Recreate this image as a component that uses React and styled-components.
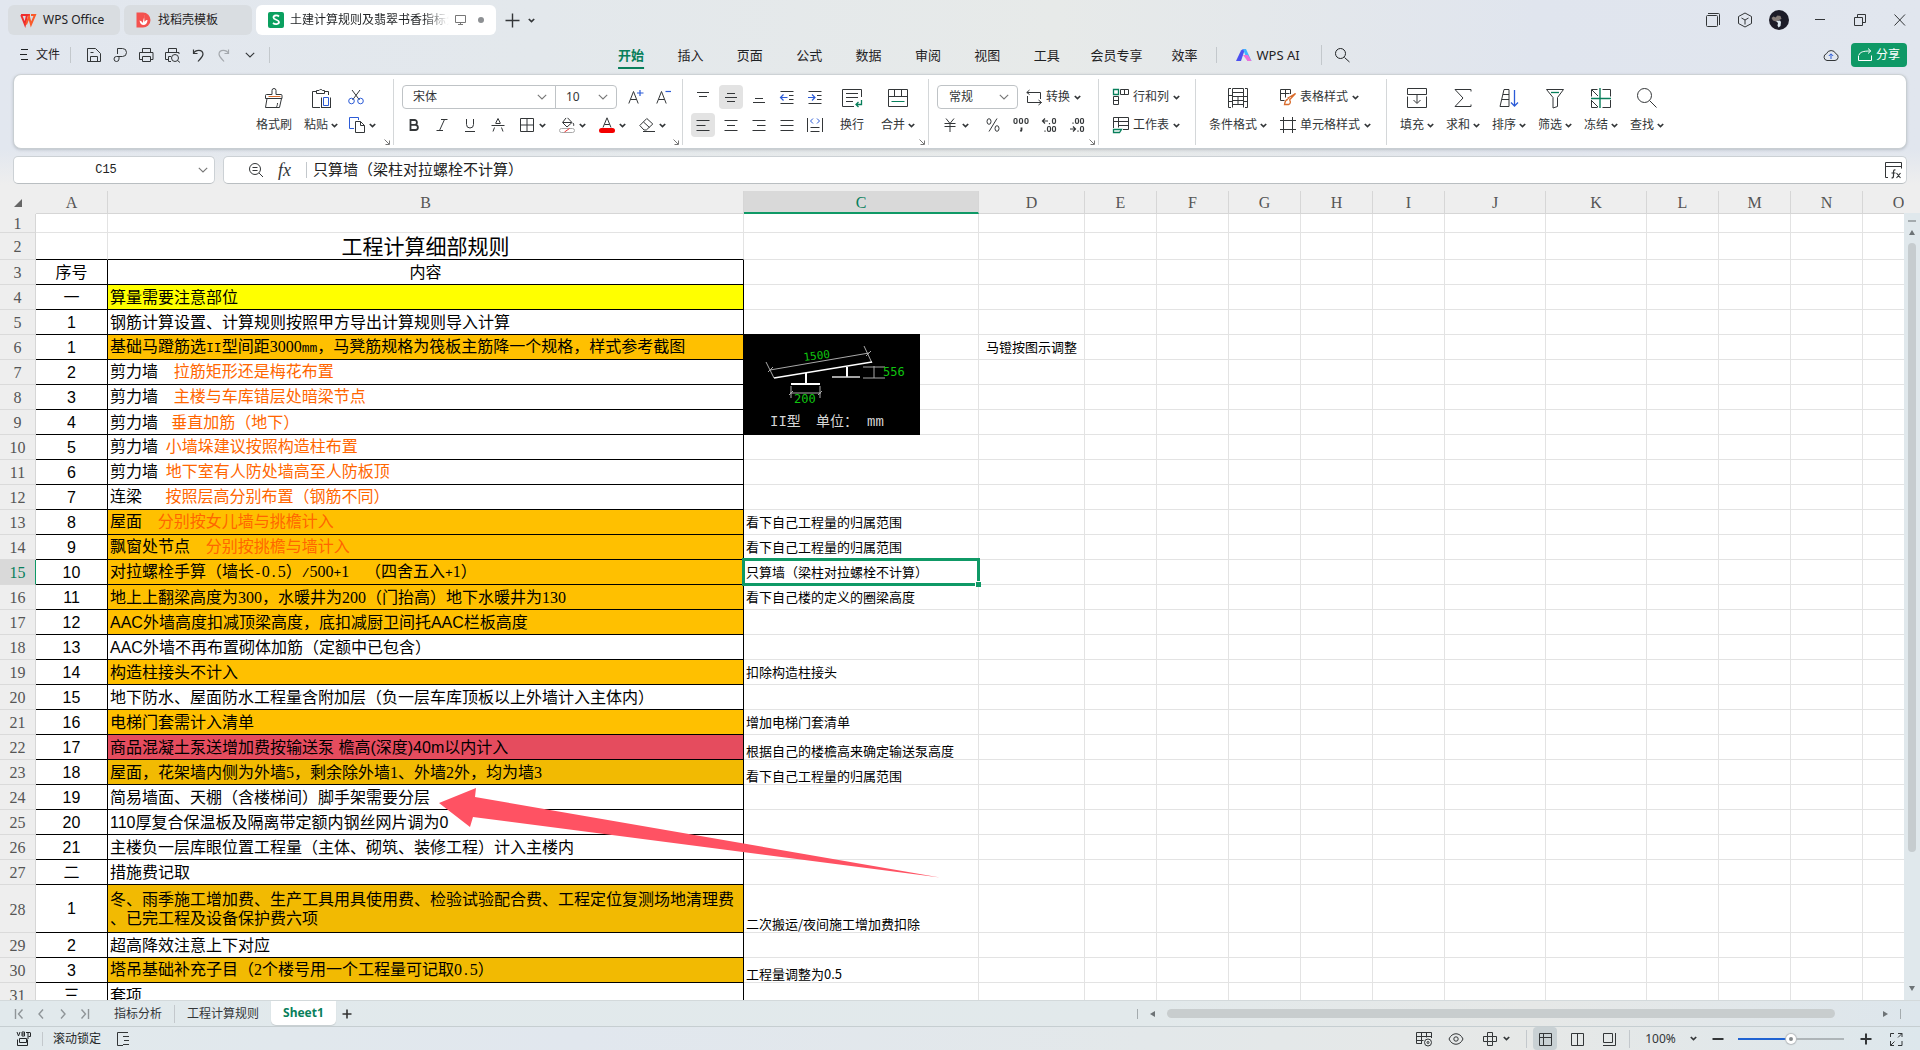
import React from "react";
import styled, { createGlobalStyle, css } from "styled-components";

const GREEN = "#0f9966";
const DEEP = "#087f5b";
const INK = "#333638";
const BLUE = "#2b5bd7";
const UI_FONT = '"Noto Sans", "Noto Sans CJK SC", sans-serif';

const Global = createGlobalStyle`
  *, *::before, *::after { box-sizing: border-box; }
  body { margin: 0; overflow: hidden; }
  button, input, select { font: inherit; color: inherit; }
`;

const Page = styled.div`
  display: flex;
  flex-direction: column;
  height: 100vh;
  font: 12px/16px ${UI_FONT};
  color: #242729;
  background: linear-gradient(90deg, #e2e7ef 0%, #e3e8ec 28%, #e7eae9 55%, #e0e5ee 80%, #e1e6ee 100%);
`;

/* ---------- shared pieces ---------- */

const Svg = styled.svg`
  flex: none;
  display: block;
  fill: none;
  stroke: currentColor;
  stroke-width: ${(p) => p.$w || 1};
  overflow: visible;
`;

const Icon = ({ size = 16, w, children }) => (
  <Svg width={size} height={size} viewBox={`0 0 ${size} ${size}`} $w={w} aria-hidden="true">
    {children}
  </Svg>
);

const Caret = () => (
  <Svg width="7" height="5" viewBox="0 0 7 5" $w={1.7} aria-hidden="true">
    <path d="M.8 1 3.5 3.6 6.2 1" />
  </Svg>
);

const WideCaret = () => (
  <Svg width="10" height="6" viewBox="0 0 10 6" $w={1.1} aria-hidden="true">
    <path d="M.8.8 5 5 9.2.8" />
  </Svg>
);

const Button = styled.button`
  display: flex;
  align-items: center;
  justify-content: center;
  border: 0;
  padding: 0;
  background: transparent;
  color: ${INK};
  white-space: nowrap;
`;

const Rule = styled.span`
  flex: none;
  width: 1px;
  height: ${(p) => p.$h || 16}px;
  margin: 0 ${(p) => p.$m || 0}px;
  background: #c3c8cc;
`;

/* ---------- title bar ---------- */

const TitleBar = styled.header`
  display: flex;
  align-items: center;
  height: 40px;
  padding-left: 8px;
`;

const AppTab = styled(Button)`
  justify-content: flex-start;
  gap: ${(p) => p.$gap || 8}px;
  width: ${(p) => p.$width}px;
  height: 30px;
  margin-right: 4px;
  padding: 0 12px;
  border-radius: 6px;
  background: ${(p) => (p.$active ? "#fff" : "#d9dde1")};
  color: #1f2224;
`;

const FadingTitle = styled.span`
  width: 160px;
  overflow: hidden;
  text-align: left;
  mask-image: linear-gradient(90deg, #000 84%, transparent);
`;

const Dot = styled.span`
  width: 6px;
  height: 6px;
  margin-left: 6px;
  border-radius: 50%;
  background: #8d9093;
`;

const TabTools = styled.div`
  display: flex;
  align-items: center;
  gap: 8px;
  padding-left: 4px;
`;

const WindowTools = styled.div`
  display: flex;
  align-items: center;
  margin-left: auto;
`;

const WindowButton = styled(Button)`
  width: ${(p) => p.$width || 40}px;
  height: 30px;
`;

/* ---------- menu row ---------- */

const MenuRow = styled.div`
  display: flex;
  align-items: center;
  justify-content: space-between;
  height: 30px;
  padding: 0 13px 0 20px;
`;

const QuickTools = styled.div`
  display: flex;
  align-items: center;
  flex: 1 1 0;
`;

const FileButton = styled(Button)`
  gap: 8px;
  color: #1f2224;
`;

const QuickButton = styled(Button)`
  width: 26px;
  height: 24px;
  opacity: ${(p) => (p.$dim ? 0.35 : 1)};
`;

const Menu = styled.nav`
  display: flex;
  align-items: center;
  margin-left: 30px;
  font-size: 13px;
`;

const MenuTabs = styled.div`
  display: grid;
  grid-template-columns: repeat(8, 1fr);
  width: 475px;
`;

const MenuButton = styled(Button)`
  height: 28px;
  color: #1f2224;
  padding: 0 ${(p) => p.$pad || 0}px;
  gap: 4px;
  ${(p) =>
    p.$active &&
    css`
      color: ${DEEP};
      font-weight: 700;
      text-decoration: underline;
      text-decoration-thickness: 2px;
      text-underline-offset: 7px;
    `}
`;

const AccountTools = styled.div`
  display: flex;
  align-items: center;
  justify-content: flex-end;
  gap: 12px;
  flex: 1 1 0;
`;

const ShareButton = styled(Button)`
  gap: 4px;
  width: 56px;
  height: 24px;
  border-radius: 4px;
  background: ${GREEN};
  color: #fff;
`;

/* ---------- ribbon ---------- */

const Ribbon = styled.section`
  display: flex;
  justify-content: center;
  height: 75px;
  margin: 4px 13px 0;
  padding-top: 4px;
  border: 1px solid #c8ced2;
  border-top-color: #cdd2d5;
  border-radius: 8px;
  background: #fff;
  box-shadow: 0 1px 3px rgba(70, 80, 90, 0.25);
`;

const Group = styled.div`
  position: relative;
  display: flex;
  gap: ${(p) => p.$gap || 0}px;
  height: 66px;
  padding: 0 ${(p) => p.$right || 0}px 0 ${(p) => p.$left || 0}px;
  border-right: ${(p) => (p.$last ? 0 : 1)}px solid #d4d7d9;
`;

const Launcher = styled(Button)`
  position: absolute;
  right: 3px;
  bottom: 0;
  width: 6px;
  height: 6px;
  color: #777;
`;

const Stack = styled.div`
  display: flex;
  flex-direction: column;
  gap: 4px;
  padding-top: 6px;
`;

const Line = styled.div`
  display: flex;
  align-items: center;
  gap: 4px;
  height: 24px;
`;

const Tool = styled(Button)`
  width: 24px;
  height: 24px;
  border-radius: 4px;
  background: ${(p) => (p.$on ? "#e3e3e3" : "transparent")};
`;

const DropTool = styled(Button)`
  gap: 4px;
  width: ${(p) => p.$width || 36}px;
  height: 24px;
  padding-left: 2px;
`;

const MoneyTool = styled(DropTool)`
  width: 40px;
  padding: 0 4px 0 2px;
`;

const WideTool = styled(Button)`
  justify-content: flex-start;
  gap: 4px;
  height: 24px;
  padding: 0 4px;
`;

const BigButton = styled(Button)`
  flex-direction: column;
  justify-content: flex-start;
  gap: 9px;
  width: ${(p) => p.$width || 46}px;
  padding-top: 9px;
`;

const BigLabel = styled.span`
  display: flex;
  align-items: center;
  gap: 3px;
  height: 16px;
`;

const Picker = styled.label`
  position: relative;
  display: flex;
  align-items: center;
  width: ${(p) => p.$width}px;
  height: 24px;
  border: 1px solid #bfc3c6;
  border-radius: ${(p) => p.$radius || "4px"};
  margin-right: ${(p) => p.$gap || 0}px;
  margin-left: ${(p) => (p.$joined ? -5 : 0)}px;
  color: ${INK};

  select {
    appearance: none;
    width: 100%;
    height: 22px;
    padding: 0 20px 0 ${(p) => p.$pad || 10}px;
    border: 0;
    background: transparent;
  }
  svg {
    position: absolute;
    right: 8px;
    color: #777;
    pointer-events: none;
  }
`;

const ColorBar = styled.span`
  width: 16px;
  height: 5px;
  border-radius: 3px;
  background: #f40000;
`;

const LetterStack = styled.span`
  display: flex;
  flex-direction: column;
  align-items: center;
`;

/* ---------- formula bar ---------- */

const FormulaRow = styled.div`
  display: flex;
  gap: 8px;
  padding: 7px 13px;
  background: linear-gradient(180deg, rgba(238, 238, 238, 0), #eeeeee 85%);
`;

const Box = styled.div`
  display: flex;
  align-items: center;
  height: 28px;
  border: 1px solid #ccd1d5;
  border-bottom-color: #b9bec1;
  border-radius: 5px;
  background: #fff;
`;

const NameBox = styled(Box)`
  width: 202px;
  color: #777;

  input {
    width: 184px;
    border: 0;
    background: transparent;
    color: #222;
    text-align: center;
    font: 12px/16px "Liberation Mono", monospace;
  }
`;

const FormulaBox = styled(Box)`
  flex: 1;
  padding: 0 4px 0 24px;
  color: ${INK};

  input {
    flex: 1;
    padding: 0 6px 2px;
    border: 0;
    background: transparent;
    color: #222;
    font: 15px/20px "Noto Sans CJK SC", sans-serif;
  }
`;

const Fx = styled.span`
  width: 16px;
  margin: 0 12px 0 14px;
  font: italic 18px/20px "Liberation Serif", serif;
`;

/* ---------- sheet ---------- */

const SheetArea = styled.main`
  position: relative;
  display: flex;
  flex: 1;
  min-height: 0;
  overflow: hidden;
  background: #eeeeee;
`;

const Viewport = styled.div`
  flex: 1;
  min-width: 0;
  overflow: hidden;
`;

const Grid = styled.table`
  width: 100%;
  min-width: 1935px;
  table-layout: fixed;
  border-collapse: separate;
  border-spacing: 0;
  background: #fff;
`;

const ColHead = styled.th`
  height: 23px;
  padding: 2px 0 0;
  border-right: 1px solid #d6d6d6;
  border-bottom: ${(p) => (p.$on ? `2px solid ${GREEN}` : "1px solid #d6d6d6")};
  background: ${(p) => (p.$on ? "#d9d9d9" : "#eeeeee")};
  color: ${(p) => (p.$on ? DEEP : "#555")};
  font: 16px/18px "Liberation Serif", serif;
`;

const Corner = styled(ColHead)`
  border-color: #eeeeee;
  svg { margin-left: 14px; }
`;

const RowHead = styled.th`
  padding: 2px 0 0;
  border-right: 1px solid ${(p) => (p.$on ? GREEN : "#d6d6d6")};
  border-bottom: 1px solid #dadada;
  background: ${(p) => (p.$on ? "#d9d9d9" : "#eeeeee")};
  color: ${(p) => (p.$on ? DEEP : "#555")};
  font: 16px/16px "Liberation Serif", serif;
`;

const Row = styled.tr`
  height: ${(p) => p.$h}px;
`;

const Cell = styled.td`
  padding: 0 2px;
  border-right: 1px solid #e3e3e3;
  border-bottom: 1px solid #e3e3e3;
  color: #000;
`;

const FormCell = styled(Cell)`
  border-right-color: ${(p) => (p.$bare ? "#e3e3e3" : "#000")};
  border-bottom-color: ${(p) => (p.$open ? "#e3e3e3" : "#000")};
  background: ${(p) => p.$fill || "#fff"};
  text-align: ${(p) => (p.$center ? "center" : "left")};
  white-space: pre-wrap;
  line-break: anywhere;
  font: ${(p) => (p.$title ? 21 : 16)}px/19px "Liberation Sans", "Noto Sans CJK SC", sans-serif;
`;

const NoteCell = styled(Cell)`
  position: relative;
  padding-bottom: ${(p) => (p.$low ? 1 : 2)}px;
  vertical-align: ${(p) => (p.$low ? "bottom" : "middle")};
  text-align: ${(p) => (p.$center ? "center" : "left")};
  white-space: nowrap;
  font: 13px/15px "Noto Sans CJK SC", sans-serif;
`;

const SongDigits = styled.span`
  font-family: "Liberation Serif", serif;
`;
const SongLatin = styled.span`
  font-family: "Liberation Mono", monospace;
  font-size: 13px;
`;
const Accent = styled.span`
  color: #ff6600;
`;

const Selection = styled.div`
  position: absolute;
  z-index: 1;
  inset: -2px;
  border: 3px solid ${GREEN};

  &::after {
    content: "";
    position: absolute;
    right: -4px;
    bottom: -4px;
    width: 6px;
    height: 6px;
    border: solid #fff;
    border-width: 1px 0 0 1px;
    background: ${GREEN};
  }
`;

const Drawing = styled.svg`
  position: absolute;
  z-index: 1;
  top: -1px;
  left: 0;
  display: block;
  background: #000;
`;

const Arrow = styled.svg`
  position: absolute;
  z-index: 2;
  left: 439px;
  top: 597px;
  pointer-events: none;
`;

const ScrollColumn = styled.div`
  display: flex;
  flex-direction: column;
  align-items: center;
  gap: 8px;
  width: 16px;
  margin-top: 22px;
  padding: 7px 0 9px;
  background: #e0e8ec;
  color: #6d7376;

  svg:last-child { margin-top: auto; }
`;

const ScrollThumb = styled.div`
  width: 8px;
  flex: 0 0 ${(p) => p.$share}%;
  border-radius: 4px;
  background: #c6cccf;
`;

/* ---------- bottom bars ---------- */

const TabsBar = styled.div`
  display: flex;
  align-items: center;
  height: 26px;
  border-top: 1px solid #d3d9db;
  background: linear-gradient(90deg, #e1e9ec, #e2e9eb 60%, #e6e8e7 80%, #dde6ec);
  color: #2a2d2f;
`;

const SheetNav = styled.div`
  display: flex;
  padding-left: 8px;
`;

const NavButton = styled(Button)`
  width: 22px;
  height: 24px;
  color: #8f9598;
`;

const SheetTab = styled(Button)`
  height: 25px;
  padding: 0 12px;
  ${(p) =>
    p.$active &&
    css`
      align-self: flex-start;
      height: 24px;
      border-radius: 0 0 5px 5px;
      background: #fff;
      color: ${DEEP};
      font-weight: 700;
      box-shadow: 0 1px 1px rgba(0, 0, 0, 0.12);
    `}
`;

const SheetTabs = styled.div`
  display: flex;
  align-items: center;
  height: 25px;
  padding-left: 6px;
`;

const HScroll = styled.div`
  display: flex;
  align-items: center;
  gap: 12px;
  width: 764px;
  margin-left: auto;
  margin-right: 19px;
  color: #6d7376;
`;

const HRule = styled(Rule)`
  background: #a4abae;
`;

const HThumb = styled.div`
  flex: 1;
  height: 9px;
  margin-right: 36px;
  border-radius: 5px;
  background: #c8cdce;
`;

const StatusBar = styled.footer`
  display: flex;
  align-items: center;
  justify-content: space-between;
  height: 24px;
  padding: 0 8px 0 16px;
  border-top: 1px solid #c6ced1;
  background: linear-gradient(90deg, #e1e9ec, #e1e7ee 30%, #e3e8ea 60%, #e6e8e7 80%, #dde7ec);
`;

const StatusSide = styled.div`
  display: flex;
  align-items: center;
  height: 23px;
`;

const StatusButton = styled(Button)`
  gap: ${(p) => p.$gap || 5}px;
  width: ${(p) => p.$width || 32}px;
  height: 23px;
  border-radius: 4px;
  background: ${(p) => (p.$on ? "#c9d1d4" : "transparent")};
`;

const Zoom = styled.input`
  appearance: none;
  width: 106px;
  height: 16px;
  margin: 0 8px 0 6px;
  background: transparent;

  &::-webkit-slider-runnable-track {
    height: 2px;
    background: linear-gradient(90deg, #1f63d2 50%, #aeb5b8 50%);
  }
  &::-webkit-slider-thumb {
    appearance: none;
    width: 10px;
    height: 10px;
    margin-top: -4px;
    border: 3px solid #fff;
    border-radius: 50%;
    background: #858a8c;
    box-shadow: 0 0 1px 1px #b5babd;
  }
`;

/* ---------- icons ---------- */

const icons = {
  brush: (
    <Icon size={20}>
      <path d="M8 6.500V2.500a2 2 0 0 1 4 0v4h5a1 1 0 0 1 1 1v3H1.500v-3a1 1 0 0 1 1-1H8M3 10.500 1.500 19.500H15.500l2-9M12 19.500c1-1.200 1.500-2.500 1.500-4.500" />
      <path d="M4.500 8.500h12" stroke="#d96b2b" />
    </Icon>
  ),
  paste: (
    <Icon size={20}>
      <path d="M5 3.500H1.500v16H9M14 3.500h3.500V7M5.500 5.500v-3H8a2 2 0 0 1 3.500 0h2v3z" />
      <path d="M10.500 9.500V19.500M19.500 9.500V19.500M10 19.500h10" />
      <path d="M12.500 9.500h5v8h-5z" stroke={BLUE} />
    </Icon>
  ),
  cut: (
    <Icon>
      <path d="m4 1 7.500 10M12 1 4.500 11" />
      <circle cx="3.500" cy="12" r="2.800" stroke={BLUE} />
      <circle cx="12.500" cy="12" r="2.800" stroke={BLUE} />
    </Icon>
  ),
  copy: (
    <Icon>
      <path d="M9.500 3V.5h-9v11H5" stroke={BLUE} />
      <path d="M6.500 4.500h5l4 4v7h-9zM11.500 4.500v4h4" />
    </Icon>
  ),
  border: (
    <Icon>
      <path d="M1.500 1.500h13v13h-13zM8 1.500v13M1.500 8h13" />
    </Icon>
  ),
  fill: (
    <Icon>
      <path d="M7 1 3.500 5.500 8 10l5-4.500L8.500.8M4 5.500h8.500M14 6c1 1.500 1 2.500.2 3" />
      <rect x=".5" y="11.500" width="15" height="4" rx="2" stroke="#aaa" />
      <path d="m5.500 15 5-3.500" stroke="#e33" />
    </Icon>
  ),
  erase: (
    <Icon>
      <path d="m.8 8.500 7-7 6 5.500-6.500 6H5zM4.500 5l6 5.500M4 14.500h12" />
    </Icon>
  ),
  wrap: (
    <Icon size={20}>
      <path d="M19.500 9V1.500h-19v17H12M4 5.500h12M4 9.500h12M4 13.500h7" />
      <path d="M19.500 12v4.500H14m2.500-2.500L14 16.500l2.500 2.500" stroke={DEEP} strokeWidth="1.300" />
    </Icon>
  ),
  merge: (
    <Icon size={20}>
      <path d="M.5 1.500h19v17H.5zM.5 8.500h19M6.500 1.500v7M13.500 1.500v7" />
      <path d="M3.500 13.500h13" stroke={DEEP} />
    </Icon>
  ),
  convert: (
    <Icon>
      <path d="M3.500 1 .8 3.500l2.700 2M.8 3.500h13.700V10M1.500 7v6.500h14m-3-2.500 3 2.500-3 2.500" />
    </Icon>
  ),
  rowscols: (
    <Icon>
      <path d="M.5.5h5v5h-5z" stroke={DEEP} strokeWidth="1.300" />
      <path d="M7.500.5h8v5h-8zM11.500.5v5M.5 7.500v8h5v-8zM.5 11.500h5" />
    </Icon>
  ),
  worksheet: (
    <Icon>
      <path d="M.5 11V.5h15v12H10M.5 4.500h15M5.500.5v10M5.500 8.500h10" />
      <path d="M.5 12.500h8l-2 3h-6z" stroke={DEEP} strokeWidth="1.300" />
    </Icon>
  ),
  conditional: (
    <Icon size={20}>
      <path d="M3 .5H.5v19H3M17 .5h2.500v19H17M4.500.5v19M4.500.5h11v8h-11M4.500 4.500h11M15.500 4v15.500M4.500 12.500h11M10 8.500v8M4.500 16.500h11M.5 7.500h4M.5 13.500h4M15.500 8.500h4M15.500 13.500h4" />
    </Icon>
  ),
  tablestyle: (
    <Icon>
      <path d="M10.500 5V.5H.5v11h4M.5 4.500h9M5.500.5v8" />
      <path d="m15.500 4.500-5.500 6-2-1.500zM8 10.500c-2 0-3 2-3.500 5h4c2-.5 2.500-3 1-4.500" stroke="#d96b2b" strokeWidth="1.300" />
    </Icon>
  ),
  cellstyle: (
    <Icon>
      <path d="M3.500 0v16M12.500 0v16M0 3.500h16M0 12.500h16" />
    </Icon>
  ),
  fillDown: (
    <Icon size={20}>
      <path d="M.5 6.500v-6h19v6zM.5 8.500v11h19v-11M10 6.500V15m-3.500-3L10 15.500l3.500-3.500" />
    </Icon>
  ),
  sum: (
    <Icon size={20}>
      <path d="M18 3.500v-2H2l8 8.500-8 8.500h16v-2" />
    </Icon>
  ),
  sort: (
    <Icon size={20}>
      <path d="m1 18.500 4-17h5v17zM4 6.500h6M3 11.500h7" />
      <path d="M15.500 2v16m-3.500-3.500 3.500 3.500 3.500-3.500" stroke={BLUE} strokeWidth="1.300" />
    </Icon>
  ),
  filter: (
    <Icon size={20}>
      <path d="M1.500 1.500h17l-6 8v9l-4.500 1.500V9.500z" />
      <path d="M6 4.500h8" stroke={DEEP} strokeWidth="1.300" />
    </Icon>
  ),
  freeze: (
    <Icon size={20}>
      <path d="M6.500 1.500H.5v7M.5 12v7.500h6M11.500 1.500h8v7M19.500 12v7.500h-8M1 2l6 6M1 13l6 6" />
      <path d="M9 0v20M0 10.500h20" stroke={DEEP} strokeWidth="1.400" />
    </Icon>
  ),
  find: (
    <Icon size={20}>
      <circle cx="7.500" cy="7.500" r="7" />
      <path d="m12.500 12.500 7 7" />
    </Icon>
  ),
};

const quick = [
  ["保存", <Icon><path d="M1.500 14.500v-13h8l5 5v8zM4.500 14.500v-5h7v5M4.500 5.500h3" /></Icon>],
  ["输出", <Icon><path d="M5.500 7V1.500h5a4 4 0 0 1 0 8h-6a2.500 2.500 0 1 0 2.500 2.500V9.500" /></Icon>],
  ["打印", <Icon><path d="M4.500 5.500v-4h8v4M4 12.500H1.500v-7h13.500v7H12.500M4.500 9.500h8v5h-8z" /></Icon>],
  ["预览", <Icon><path d="M4.500 5.500v-4h8v4M4.500 12.500h-3v-7H15V7M7 14.500H4.500v-5H7" /><circle cx="11" cy="11" r="3.500" /><path d="m13.500 13.500 2.500 2" /></Icon>],
  ["撤销", <Icon w={1.2}><path d="M3.500 2.500v4h4M3.500 6.500c2-4 9-4.500 9.500.5 0 3-3 5-5 7.500" /></Icon>],
];

const alignTop = [
  ["顶端", "M2 3.500h12M4 7.500h8"],
  ["垂直居中", "M4 4.500h8M2 8.500h12M4 12.500h8"],
  ["底端", "M4 9.500h8M2 13.500h12"],
];
const alignLow = [
  ["左对齐", "M1.500 3.500h13M1.500 8.500h9M1.500 13.500h13"],
  ["居中", "M1.500 3.500h13M4 8.500h8M1.500 13.500h13"],
  ["右对齐", "M1.500 3.500h13M6 8.500h8.500M1.500 13.500h13"],
  ["两端对齐", "M1.500 3.500h13M1.500 8.500h13M1.500 13.500h13"],
];

/* ---------- data ---------- */

const ORANGE = "#ffc000";
const AMBER = "#f2ba02";

const rows = [
  { n: 1, h: 19, bare: true, open: true },
  { n: 2, h: 27, bare: true, b: "工程计算细部规则", title: true },
  { n: 3, a: "序号", b: "内容", center: true },
  { n: 4, a: "一", b: "算量需要注意部位", fill: "#ffff00" },
  { n: 5, a: "1", b: "钢筋计算设置、计算规则按照甲方导出计算规则导入计算" },
  { n: 6, a: "1", b: "基础马蹬筋选II型间距3000mm，马凳筋规格为筏板主筋降一个规格，样式参考截图", fill: ORANGE, d: "马镫按图示调整", drawing: true },
  { n: 7, a: "2", b: "剪力墙  ", accent: "拉筋矩形还是梅花布置" },
  { n: 8, a: "3", b: "剪力墙  ", accent: "主楼与车库错层处暗梁节点" },
  { n: 9, a: "4", b: "剪力墙   ", accent: "垂直加筋（地下）", arial: true },
  { n: 10, a: "5", b: "剪力墙 ", accent: "小墙垛建议按照构造柱布置" },
  { n: 11, a: "6", b: "剪力墙 ", accent: "地下室有人防处墙高至人防板顶" },
  { n: 12, a: "7", b: "连梁   ", accent: "按照层高分别布置（钢筋不同）" },
  { n: 13, a: "8", b: "屋面  ", accent: "分别按女儿墙与挑檐计入", fill: ORANGE, c: "看下自己工程量的归属范围" },
  { n: 14, a: "9", b: "飘窗处节点  ", accent: "分别按挑檐与墙计入", fill: ORANGE, c: "看下自己工程量的归属范围" },
  { n: 15, a: "10", b: "对拉螺栓手算（墙长-0.5）/500+1  （四舍五入+1）", fill: ORANGE, c: "只算墙（梁柱对拉螺栓不计算）", selected: true },
  { n: 16, a: "11", b: "地上上翻梁高度为300，水暖井为200（门抬高）地下水暖井为130", fill: ORANGE, c: "看下自己楼的定义的圈梁高度" },
  { n: 17, a: "12", b: "AAC外墙高度扣减顶梁高度，底扣减厨卫间托AAC栏板高度", fill: ORANGE, arial: true },
  { n: 18, a: "13", b: "AAC外墙不再布置砌体加筋（定额中已包含）", arial: true },
  { n: 19, a: "14", b: "构造柱接头不计入", fill: ORANGE, c: "扣除构造柱接头" },
  { n: 20, a: "15", b: "地下防水、屋面防水工程量含附加层（负一层车库顶板以上外墙计入主体内）" },
  { n: 21, a: "16", b: "电梯门套需计入清单", fill: ORANGE, c: "增加电梯门套清单" },
  { n: 22, a: "17", b: "商品混凝土泵送增加费按输送泵 檐高(深度)40m以内计入", fill: "#e54c5e", arial: true, c: "根据自己的楼檐高来确定输送泵高度", low: true },
  { n: 23, a: "18", b: "屋面，花架墙内侧为外墙5，剩余除外墙1、外墙2外，均为墙3", fill: AMBER, c: "看下自己工程量的归属范围", low: true },
  { n: 24, a: "19", b: "简易墙面、天棚（含楼梯间）脚手架需要分层" },
  { n: 25, a: "20", b: "110厚复合保温板及隔离带定额内钢丝网片调为0", arial: true },
  { n: 26, a: "21", b: "主楼负一层库眼位置工程量（主体、砌筑、装修工程）计入主楼内" },
  { n: 27, a: "二", b: "措施费记取" },
  { n: 28, h: 48, a: "1", b: "冬、雨季施工增加费、生产工具用具使用费、检验试验配合费、工程定位复测场地清理费、已完工程及设备保护费六项", fill: AMBER, c: "二次搬运/夜间施工增加费扣除", low: true },
  { n: 29, a: "2", b: "超高降效注意上下对应" },
  { n: 30, a: "3", b: "塔吊基础补充子目（2个楼号用一个工程量可记取0.5）", fill: AMBER, c: "工程量调整为0.5", low: true },
  { n: 31, a: "三", b: "套项" },
];

const columns = [
  ["A", 72], ["B", 636], ["C", 235], ["D", 106], ["E", 72], ["F", 72], ["G", 72], ["H", 72],
  ["I", 72], ["J", 101], ["K", 101], ["L", 72], ["M", 72], ["N", 72], ["O", 0],
];

const Col = styled.col`
  width: ${(p) => (p.$w ? `${p.$w}px` : "auto")};
`;

function SongText({ text }) {
  return text.split(/([0-9]+|[A-Za-z.\/+\- ]+)/).map((part, i) => {
    if (/^[0-9]/.test(part)) return <SongDigits key={i}>{part}</SongDigits>;
    if (/^[A-Za-z.\/+\- ]/.test(part)) return <SongLatin key={i}>{part}</SongLatin>;
    return part;
  });
}

function SteelDrawing() {
  return (
    <Drawing width="176" height="101" viewBox="0 0 176 101" role="img" aria-label="II型">
      <g fill="none" stroke="#a9a9a9" strokeWidth="1">
        <path d="M26 36 125 19M22 28l8 16M120 12l8 17M24 38l5-5M122 22l5-5" />
        <path d="M119 33h22M119 44h22M130 32v12M46 59h31M47 52v12M76 52v12M45 61l4-4M74 61l4-4" />
      </g>
      <path d="M30 44 128 28" fill="none" stroke="#fff" strokeWidth="1.500" />
      <path d="M62 39v11M47 50h29M103 33v10" fill="none" stroke="#fff" strokeWidth="2" />
      <path d="M88 43h28" stroke="#ddd" strokeWidth="1.500" />
      <g fill="#0fc40f" fontFamily="DejaVu Sans Mono, monospace">
        <text x="60" y="27" fontSize="11" transform="rotate(-7 60 27)">1500</text>
        <text x="50" y="69" fontSize="12">200</text>
        <text x="139" y="42" fontSize="12">556</text>
      </g>
      <g fill="#d6d6d6" fontFamily="Liberation Mono, Noto Sans CJK SC, monospace" fontSize="14">
        <text x="26" y="92">II型</text>
        <text x="72" y="92">单位：</text>
        <text x="123" y="92">mm</text>
      </g>
    </Drawing>
  );
}

function SheetRow({ row }) {
  return (
    <Row $h={row.h || 25}>
      <RowHead scope="row" $on={row.selected}>{row.n}</RowHead>
      <FormCell $center $bare={row.bare} $open={row.open}>{row.a}</FormCell>
      <FormCell $center={row.center || row.title} $title={row.title} $fill={row.fill} $bare={row.bare} $open={row.open}>
        {row.b && (row.arial ? row.b : <SongText text={row.b} />)}
        {row.accent && <Accent>{row.accent}</Accent>}
      </FormCell>
      <NoteCell $low={row.low}>
        {row.c}
        {row.selected && <Selection />}
        {row.drawing && <SteelDrawing />}
      </NoteCell>
      <NoteCell $center>{row.d}</NoteCell>
      {columns.slice(4).map(([name]) => <Cell key={name} />)}
    </Row>
  );
}

const Big = ({ icon, label, width, drop = true }) => (
  <BigButton $width={width}>
    {icons[icon]}
    <BigLabel>{label}{drop && <Caret />}</BigLabel>
  </BigButton>
);

const Wide = ({ icon, label }) => (
  <WideTool>{icons[icon]}{label}<Caret /></WideTool>
);

const MoreSettings = () => (
  <Launcher aria-label="更多设置">
    <Icon size={6}><path d="m.5.5 4.500 4.500M5.500 1.500v4h-4" /></Icon>
  </Launcher>
);

function RibbonPanel() {
  return (
    <Ribbon>
      <Group $right={13}>
        <Big icon="brush" label="格式刷" width={48} drop={false} />
        <Big icon="paste" label="粘贴" />
        <Stack>
          <Line><Tool aria-label="剪切">{icons.cut}</Tool></Line>
          <Line><DropTool aria-label="复制">{icons.copy}<Caret /></DropTool></Line>
        </Stack>
        <MoreSettings />
      </Group>

      <Group $left={8} $right={6}>
        <Stack>
          <Line>
            <Picker $width={154} $radius="4px 0 0 4px">
              <select aria-label="字体" defaultValue="宋体"><option>宋体</option></select>
              <WideCaret />
            </Picker>
            <Picker $width={62} $radius="0 4px 4px 0" $joined $gap={3}>
              <select aria-label="字号" defaultValue="10"><option>10</option></select>
              <WideCaret />
            </Picker>
            <Tool aria-label="增大字号">
              <Icon><path d="m.8 14.500 4.700-12 4.700 12M2.500 10.500h6" /><path d="M12 1v6M9 4h6.500" stroke={BLUE} strokeWidth="1.200" /></Icon>
            </Tool>
            <Tool aria-label="减小字号">
              <Icon><path d="m.8 14.500 4.700-12 4.700 12M2.500 10.500h6" /><path d="M9.500 2.500H15" stroke={BLUE} strokeWidth="1.200" /></Icon>
            </Tool>
          </Line>
          <Line>
            <Tool aria-label="加粗"><Icon w={1.8}><path d="M4.500 3h4a2.300 2.300 0 0 1 0 4.800h-4zM4.500 7.800h4.800a2.600 2.600 0 0 1 0 5.200H4.500z" /></Icon></Tool>
            <Tool aria-label="倾斜"><Icon><path d="M7 2.500h6.500M2.500 13.500H9M10.500 2.500l-5 11" /></Icon></Tool>
            <Tool aria-label="下划线"><Icon><path d="M4.500 2v5.500a3.500 3.500 0 0 0 7 0V2M3 14.500h10" /></Icon></Tool>
            <Tool aria-label="删除线"><Icon><path d="m5.500 6.500 2.500-5 2.500 5M1.500 8.500h13M4.500 10.500l-1.500 4M11.500 10.500l1.500 4M6 6.500h4" /></Icon></Tool>
            <DropTool aria-label="边框">{icons.border}<Caret /></DropTool>
            <DropTool aria-label="填充颜色">{icons.fill}<Caret /></DropTool>
            <DropTool aria-label="字体颜色">
              <LetterStack>
                <Svg width="10" height="11" viewBox="0 0 10 11"><path d="M1 10.500 5 .8l4 9.700M2.500 7.500h5" /></Svg>
                <ColorBar />
              </LetterStack>
              <Caret />
            </DropTool>
            <DropTool aria-label="清除">{icons.erase}<Caret /></DropTool>
          </Line>
        </Stack>
        <MoreSettings />
      </Group>

      <Group $left={8} $right={9}>
        <Stack>
          <Line>
            {alignTop.map(([name, d], i) => (
              <Tool key={name} aria-label={name} $on={i === 1}><Icon><path d={d} /></Icon></Tool>
            ))}
            <Tool aria-label="减少缩进"><Icon><path d="M1.500 2.500h13M10 6.500h4.500M10 10.500h4.500M1.500 14.500h13" /><path d="M8.500 8.500H1.500m3-3-3 3 3 3" stroke={BLUE} strokeWidth="1.200" /></Icon></Tool>
            <Tool aria-label="增加缩进"><Icon><path d="M1.500 2.500h13M10 6.500h4.500M10 10.500h4.500M1.500 14.500h13" /><path d="M1 8.500h7m-3-3 3 3-3 3" stroke={BLUE} strokeWidth="1.200" /></Icon></Tool>
          </Line>
          <Line>
            {alignLow.map(([name, d], i) => (
              <Tool key={name} aria-label={name} $on={i === 0}><Icon><path d={d} /></Icon></Tool>
            ))}
            <Tool aria-label="分散对齐"><Icon><path d="M.5 1v14M15.500 1v14M3.500 10.500h9M3.500 14.500h9" /><path d="M6 1.500 3.500 4 6 6.500M10 1.500 12.500 4 10 6.500" stroke={BLUE} /></Icon></Tool>
          </Line>
        </Stack>
        <Big icon="wrap" label="换行" width={50} drop={false} />
        <Big icon="merge" label="合并" width={42} />
        <MoreSettings />
      </Group>

      <Group $left={8} $right={9}>
        <Stack>
          <Line>
            <Picker $width={81} $pad={11}>
              <select aria-label="数字格式" defaultValue="常规"><option>常规</option></select>
              <WideCaret />
            </Picker>
            <Wide icon="convert" label="转换" />
          </Line>
          <Line>
            <MoneyTool aria-label="货币"><Icon><path d="m4 1.500 4 5 4-5M2.500 6.500h11M2.500 9.500h11M8 6.500v8.500" /></Icon><Caret /></MoneyTool>
            <Tool aria-label="百分比"><Icon><path d="M12 1.500 4 14.500" /><ellipse cx="4" cy="4.500" rx="2" ry="2.800" /><ellipse cx="12" cy="11.500" rx="2" ry="2.800" /></Icon></Tool>
            <Tool aria-label="千位分隔"><Icon w={1.2}><rect x="1" y="1.500" width="3" height="5" rx="1.400" /><rect x="6.500" y="1.500" width="3" height="5" rx="1.400" /><rect x="12" y="1.500" width="3" height="5" rx="1.400" /><path d="M8.500 10.500v2.500l-1 1.500" strokeWidth="1.800" /></Icon></Tool>
            <Tool aria-label="增加小数位"><Icon w={1.2}><path d="M7 4H1.500M4 1.500 1.500 4 4 6.500M8.500 6v1.200M4 13.500v1.200" /><rect x="11.500" y="1.500" width="3" height="5" rx="1.400" /><rect x="6.500" y="9.500" width="3" height="5" rx="1.400" /><rect x="11.500" y="9.500" width="3" height="5" rx="1.400" /></Icon></Tool>
            <Tool aria-label="减少小数位"><Icon w={1.2}><path d="M1 12h5.500M4 9.500 6.500 12 4 14.500M9 13.500v1.200M4 5.500v1.200" /><rect x="6.500" y="1.500" width="3" height="5" rx="1.400" /><rect x="11.500" y="1.500" width="3" height="5" rx="1.400" /><rect x="11.500" y="9.500" width="3" height="5" rx="1.400" /></Icon></Tool>
          </Line>
        </Stack>
        <MoreSettings />
      </Group>

      <Group $left={10} $right={11}>
        <Stack>
          <Wide icon="rowscols" label="行和列" />
          <Wide icon="worksheet" label="工作表" />
        </Stack>
      </Group>

      <Group $left={10} $right={11} $gap={6}>
        <Big icon="conditional" label="条件格式" width={64} />
        <Stack>
          <Wide icon="tablestyle" label="表格样式" />
          <Wide icon="cellstyle" label="单元格样式" />
        </Stack>
      </Group>

      <Group $left={7} $last>
        <Big icon="fillDown" label="填充" />
        <Big icon="sum" label="求和" />
        <Big icon="sort" label="排序" />
        <Big icon="filter" label="筛选" />
        <Big icon="freeze" label="冻结" />
        <Big icon="find" label="查找" />
      </Group>
    </Ribbon>
  );
}

export default function App() {
  return (
    <Page>
      <Global />
      <TitleBar>
        <AppTab $width={112} $gap={7}>
          <Svg width="16" height="12" viewBox="0 0 16 12" $w={2}>
            <path d="M1 1h6L5 10.500 1.200 1M7 1h3" stroke="#f02d2d" />
            <path d="M6 10.500 9 3l2 7.500L15 1h-4" stroke="#fa5a2a" />
          </Svg>
          WPS Office
        </AppTab>
        <AppTab $width={128} $gap={7}>
          <Svg width="15" height="16" viewBox="0 0 15 16">
            <path d="M.5.500H7a7.500 7.500 0 0 1 0 15H.5z" fill="#f4524f" stroke="none" />
            <path d="M8 3c1 2-1 4-1 8-1-1-1.500-2-3.500-2.500.5 3 2 4.500 4 4.500s4-2 4-5c-1.500 0-2 .5-3 2" fill="#fff" stroke="none" />
          </Svg>
          找稻壳模板
        </AppTab>
        <AppTab $width={240} $gap={6} $active>
          <Svg width="16" height="16" viewBox="0 0 16 16">
            <rect width="16" height="16" rx="2" fill="#0aa05f" stroke="none" />
            <path d="M11 4.500C9.500 3 5.500 3 5.500 5.500S11 7.500 11 10s-4.200 2.600-6 1" stroke="#fff" strokeWidth="1.800" />
          </Svg>
          <FadingTitle>土建计算规则及翡翠书香指标分析</FadingTitle>
          <Svg width="11" height="10" viewBox="0 0 11 10"><path d="M.5.5h10v7H.5zM5.500 7.500v2M3 9.500h5" stroke="#777" /></Svg>
          <Dot />
        </AppTab>
        <TabTools>
          <Button aria-label="新建标签"><Icon w={1.4}><path d="M8.500 1.500v14M1.500 8.500h14" /></Icon></Button>
          <Button aria-label="标签列表"><Caret /></Button>
        </TabTools>
        <WindowTools>
          <WindowButton $width={38} aria-label="窗口"><Icon><rect x="1.500" y="3.500" width="11" height="11" rx="1" /><path d="M3 1.500h10.500a1 1 0 0 1 1 1V13" /></Icon></WindowButton>
          <WindowButton $width={26} aria-label="工作台"><Icon><path d="m8 1 6.500 3.500v7L8 15l-6.500-3.500v-7zM4.500 6 8 8l3.500-2M8 8v4.500" /></Icon></WindowButton>
          <WindowButton $width={42} aria-label="账户">
            <Svg width="20" height="20" viewBox="0 0 20 20">
              <circle cx="10" cy="10" r="10" fill="#1c1c28" stroke="none" />
              <path d="m2.500 8 2-1.500 2 1 2-2 3 .5 1 3-2.500 1-3 1.500-3-1z" fill="#857c78" stroke="none" />
              <path d="m7 11 4-.5 1 1.500-.5 4-2 1.500-1-2 .5-2.500z" fill="#dce8ef" stroke="none" />
            </Svg>
          </WindowButton>
          <WindowButton aria-label="最小化"><Icon><path d="M3 7.500h10" /></Icon></WindowButton>
          <WindowButton aria-label="还原"><Icon><path d="M2.500 5.500h8v8h-8zM5.500 5.500v-3h8v8h-3" /></Icon></WindowButton>
          <WindowButton aria-label="关闭"><Icon><path d="m2.500 2.500 10.500 11M13 2.500l-10.500 11" /></Icon></WindowButton>
        </WindowTools>
      </TitleBar>

      <MenuRow>
        <QuickTools>
          <FileButton>
            <Svg width="8" height="12" viewBox="0 0 8 12"><path d="M1 .5h7M0 5.500h7M1 10.500h7" /></Svg>
            文件
          </FileButton>
          <Rule $m={10} />
          {quick.map(([name, icon]) => <QuickButton key={name} aria-label={name}>{icon}</QuickButton>)}
          <QuickButton $dim aria-label="恢复"><Icon w={1.2}><path d="M12.500 2.500v4h-4M12.500 6.500c-2-4-9-4.500-9.500.5 0 3 3 5 5 7.500" /></Icon></QuickButton>
          <QuickButton aria-label="自定义"><WideCaret /></QuickButton>
          <Rule $m={6} />
        </QuickTools>
        <Menu>
          <MenuTabs>
            {["开始", "插入", "页面", "公式", "数据", "审阅", "视图", "工具"].map((name, i) => (
              <MenuButton key={name} $active={i === 0}>{name}</MenuButton>
            ))}
          </MenuTabs>
          <MenuButton $pad={14}>会员专享</MenuButton>
          <MenuButton $pad={15}>效率</MenuButton>
          <Rule $m={4} />
          <MenuButton $pad={15}>
            <Svg width="16" height="12" viewBox="0 0 16 12">
              <path d="M0 12 5 1.500Q6 0 8 0h1L5 12z" fill="#4b4ff0" stroke="none" />
              <path d="M7 0h3l5.500 12h-4z" fill="#41b4ff" stroke="none" />
              <path d="M7 6h5l3.500 6h-4z" fill="#f06fd8" stroke="none" />
            </Svg>
            WPS AI
          </MenuButton>
          <Rule $m={6} $h={20} />
          <MenuButton $pad={6} aria-label="搜索"><Icon><circle cx="6.500" cy="6.500" r="5" /><path d="m10.500 10.500 5 4.500" /></Icon></MenuButton>
        </Menu>
        <AccountTools>
          <Button aria-label="云同步"><Icon><path d="M4 13.500a3.500 3.500 0 0 1-.5-6.800 5 5 0 0 1 9.300 0 3.500 3.500 0 0 1-.8 6.800z" /><path d="M8 12V7M5.800 9 8 6.800 10.200 9" stroke={BLUE} /></Icon></Button>
          <ShareButton><Icon size={14}><path d="M.5 7.500v5h13v-5M1 7c1-3 4-4 11.500-4M10 .5 12.800 3 10 5.500" /></Icon>分享</ShareButton>
        </AccountTools>
      </MenuRow>

      <RibbonPanel />

      <FormulaRow>
        <NameBox>
          <input aria-label="名称框" defaultValue="C15" />
          <WideCaret />
        </NameBox>
        <FormulaBox>
          <Icon><circle cx="7" cy="7" r="5.500" /><path d="m11 11 4 4M4.500 5.500h5M4.500 8.500h5" /></Icon>
          <Fx>fx</Fx>
          <Rule />
          <input aria-label="编辑栏" defaultValue="只算墙（梁柱对拉螺栓不计算）" />
          <Button aria-label="函数面板">
            <Icon size={17}>
              <path d="M3 15.500H.5V.5h16v6M.5 4.500h16" />
              <path d="M10.500 8c-2-.5-2 1-2 3v3c0 1.500-.5 2-2 2M6.500 11h4M11.500 11l4 5M15.500 11l-4 5" strokeWidth="1.200" />
            </Icon>
          </Button>
        </FormulaBox>
      </FormulaRow>

      <SheetArea>
        <Viewport>
          <Grid>
            <colgroup>
              <Col $w={36} />
              {columns.map(([name, w]) => <Col key={name} $w={w} />)}
            </colgroup>
            <thead>
              <tr>
                <Corner><Svg width="8" height="8" viewBox="0 0 8 8"><path d="M8 0v8H0z" fill="#666" stroke="none" /></Svg></Corner>
                {columns.map(([name]) => <ColHead key={name} scope="col" $on={name === "C"}>{name}</ColHead>)}
              </tr>
            </thead>
            <tbody>
              {rows.map((row) => <SheetRow key={row.n} row={row} />)}
            </tbody>
          </Grid>
        </Viewport>
        <ScrollColumn>
          <Svg width="8" height="2" viewBox="0 0 8 2"><path d="M0 1h8" stroke="#a4abae" strokeWidth="2" /></Svg>
          <Svg width="6" height="5" viewBox="0 0 6 5"><path d="M0 5 3 0l3 5z" fill="currentColor" stroke="none" /></Svg>
          <ScrollThumb $share={79} />
          <Svg width="6" height="5" viewBox="0 0 6 5"><path d="M0 0h6L3 5z" fill="currentColor" stroke="none" /></Svg>
        </ScrollColumn>
        <Arrow width="501" height="92" viewBox="0 0 501 92" aria-hidden="true">
          <path d="M0 15 37 0l-1 9 465 80.500L34 29l-3 10z" fill="#ff5263" />
        </Arrow>
      </SheetArea>

      <TabsBar>
        <SheetNav>
          <NavButton aria-label="首个"><Icon size={10}><path d="M1.500 0v10M8.500.5 4.500 5l4 4.500" strokeWidth="1.400" /></Icon></NavButton>
          <NavButton aria-label="上一个"><Icon size={10}><path d="M7 .5 3 5l4 4.500" strokeWidth="1.400" /></Icon></NavButton>
          <NavButton aria-label="下一个"><Icon size={10}><path d="m3 .5 4 4.500-4 4.500" strokeWidth="1.400" /></Icon></NavButton>
          <NavButton aria-label="末个"><Icon size={10}><path d="M8.500 0v10M1.500.5l4 4.500-4 4.500" strokeWidth="1.400" /></Icon></NavButton>
        </SheetNav>
        <SheetTabs>
          <SheetTab>指标分析</SheetTab>
          <Rule $h={18} />
          <SheetTab>工程计算规则</SheetTab>
          <SheetTab $active>Sheet1</SheetTab>
          <NavButton aria-label="新建工作表"><Svg width="10" height="10" viewBox="0 0 10 10" $w={1.6}><path d="M5 .5v9M.5 5h9" stroke="#333" /></Svg></NavButton>
        </SheetTabs>
        <HScroll>
          <HRule $h={10} />
          <Svg width="5" height="6" viewBox="0 0 5 6"><path d="M5 0v6L0 3z" fill="currentColor" stroke="none" /></Svg>
          <HThumb />
          <Svg width="5" height="6" viewBox="0 0 5 6"><path d="M0 0v6l5-3z" fill="currentColor" stroke="none" /></Svg>
          <HRule $h={10} />
        </HScroll>
      </TabsBar>

      <StatusBar>
        <StatusSide>
          <Icon><path d="m1 1 1.500 4L4 1M6 1v4h2.500V1zM6 3h2.500M10 1.500h4M12 1.500V8M1.500 8.500v6h10v-6M3.500 7.500h7v4h-7zM14.500 1.500v4h-2" /></Icon>
          <Rule $h={14} $m={10} />
          滚动锁定
          <StatusButton $width={44} aria-label="状态栏选项"><Icon><path d="M8 14.500H2.500v-13H13M8 5.500h6M9 9.500h5M8 13.500h6" /></Icon></StatusButton>
        </StatusSide>
        <StatusSide>
          <StatusButton aria-label="表格视图"><Icon><path d="M6 12.500H.5V1.500h15V7M.5 5.500h15M5.500 1.500v11M10.500 1.500v5M.5 9.500h7" /><circle cx="12" cy="11.500" r="3.500" /><circle cx="12" cy="11.500" r="1" /></Icon></StatusButton>
          <StatusButton aria-label="护眼"><Icon><path d="M1 8c3-7 11-7 14 0-3 7-11 7-14 0z" /><circle cx="8" cy="8" r="2.200" /></Icon></StatusButton>
          <StatusButton $width={48} aria-label="阅读模式"><Icon><path d="M5.500 5.500v-4h5v4h4v5h-4v4h-5v-4h-4v-5zM5.500 5.500h5v5h-5z" /></Icon><Caret /></StatusButton>
          <Rule $h={18} $m={6} />
          <StatusButton $width={24} $on aria-label="普通视图"><Icon><path d="M2.500 2.500h12v12h-12zM2.500 6.500h12M6.500 2.500v12" /></Icon></StatusButton>
          <StatusButton $width={40} aria-label="分页预览"><Icon><path d="M2.500 2.500h12v12h-12zM8.500 2.500v12" /></Icon></StatusButton>
          <StatusButton $width={24} aria-label="页面布局"><Icon><path d="M2.500 2.500h9v9h-9zM14.500 2v12.500H2" /></Icon></StatusButton>
          <Rule $h={18} $m={8} />
          <StatusButton $width={66} $gap={14} aria-label="缩放比例">100%<Caret /></StatusButton>
          <StatusButton $width={28} aria-label="缩小"><Icon w={2}><path d="M2.500 8h11" /></Icon></StatusButton>
          <Zoom type="range" min="0" max="100" defaultValue="50" aria-label="缩放" />
          <StatusButton $width={28} aria-label="放大"><Icon w={2}><path d="M2.500 8h11M8 2.500v11" /></Icon></StatusButton>
          <StatusButton aria-label="全屏"><Icon><path d="M2.500 6V2.500H6M10 2.500h4V6M14 10v4.500h-4M6 14.500H2.500V10M14 2.500 10 6.500M2.500 14.500l4-4" /></Icon></StatusButton>
        </StatusSide>
      </StatusBar>
    </Page>
  );
}
